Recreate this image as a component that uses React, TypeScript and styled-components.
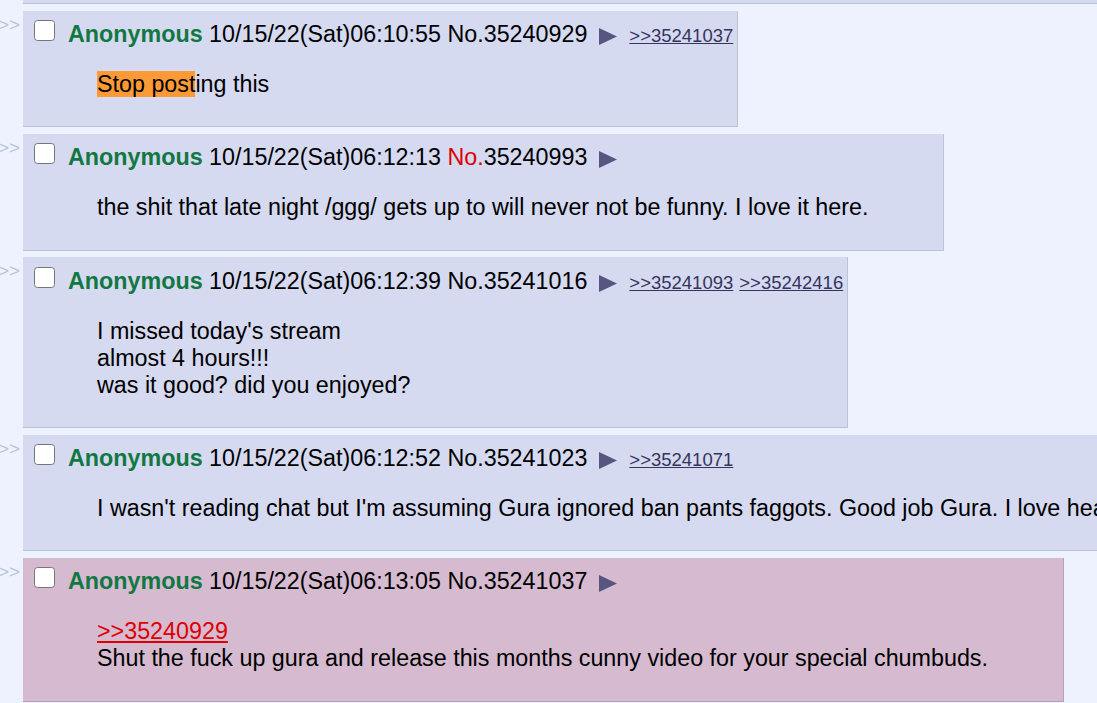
import React from 'react';
import styled, { createGlobalStyle, css } from 'styled-components';

const GlobalStyle = createGlobalStyle`
  html, body {
    margin: 0;
    padding: 0;
    overflow: hidden;
    background: #eef2ff;
  }
  body {
    font-family: 'Liberation Sans', Arial, Helvetica, sans-serif;
    font-size: 23.3px;
    color: #000;
  }
`;

const Thread = styled.div`
  display: flex;
  flex-direction: column;
`;

const PrevTail = styled.div`
  height: 3px;
  margin: 0 0 6.67px 23px;
  background: #d6daf0;
  border-bottom: 1px solid #b7c5d9;
`;

const Row = styled.div`
  display: flex;
  align-items: flex-start;
  margin-bottom: 6.67px;
`;

const SideArrows = styled.div`
  flex: 0 0 25px;
  margin-left: -2px;
  padding-top: 3px;
  font-size: 19px;
  color: #b7c5d9;
  white-space: nowrap;
  overflow: hidden;
`;

const Post = styled.div<{ $highlight?: boolean }>`
  flex-shrink: 0;
  width: max-content;
  padding: 9.5px 4px 0 0;
  background: #d6daf0;
  border-right: 1px solid #b7c5d9;
  border-bottom: 1px solid #b7c5d9;
  ${(p) =>
    p.$highlight &&
    css`
      background: #d6bad0;
      border-color: #ba9dbf;
    `}
`;

const PostInfo = styled.div`
  height: 27px;
  line-height: 27px;
  padding-left: 11px;
  white-space: nowrap;
`;

const Check = styled.input.attrs({ type: 'checkbox' })`
  appearance: none;
  display: inline-block;
  width: 21px;
  height: 21px;
  margin: 0 13px 0 0;
  box-sizing: border-box;
  vertical-align: 1px;
  background: #fff;
  border: 1.5px solid #767676;
  border-radius: 3.5px;
`;

const Name = styled.span`
  color: #117743;
  font-weight: bold;
`;

const PostNum = styled.span<{ $hover?: boolean }>`
  color: ${(p) => (p.$hover ? '#dd0000' : '#000')};
`;

const MenuBtn = styled.svg`
  width: 18px;
  height: 17px;
  margin: 0 12px 0 12px;
  vertical-align: -3px;
`;

const Backlink = styled.a`
  font-size: 18.5px;
  color: #34345c;
  text-decoration: underline;
  margin-right: 6px;
  &:last-child {
    margin-right: 0;
  }
`;

const Message = styled.blockquote`
  margin: 24px 71px 28.17px 74px;
  line-height: 27px;
  white-space: nowrap;
`;

const Mark = styled.span`
  background: #fd9a36;
`;

const QuoteLink = styled.a`
  color: #dd0000;
  text-decoration: underline;
`;

type PostData = {
  time: string;
  no: string;
  backlinks?: string[];
  hoverNo?: boolean;
  highlight?: boolean;
  body: React.ReactNode;
};

const posts: PostData[] = [
  {
    time: '10/15/22(Sat)06:10:55',
    no: '35240929',
    backlinks: ['35241037'],
    body: (
      <>
        <Mark>Stop post</Mark>ing this
      </>
    ),
  },
  {
    time: '10/15/22(Sat)06:12:13',
    no: '35240993',
    hoverNo: true,
    body: 'the shit that late night /ggg/ gets up to will never not be funny. I love it here.',
  },
  {
    time: '10/15/22(Sat)06:12:39',
    no: '35241016',
    backlinks: ['35241093', '35242416'],
    body: (
      <>
        I missed today's stream
        <br />
        almost 4 hours!!!
        <br />
        was it good? did you enjoyed?
      </>
    ),
  },
  {
    time: '10/15/22(Sat)06:12:52',
    no: '35241023',
    backlinks: ['35241071'],
    body: "I wasn't reading chat but I'm assuming Gura ignored ban pants faggots. Good job Gura. I love hearing her laugh.",
  },
  {
    time: '10/15/22(Sat)06:13:05',
    no: '35241037',
    highlight: true,
    body: (
      <>
        <QuoteLink href="#p35240929">&gt;&gt;35240929</QuoteLink>
        <br />
        Shut the fuck up gura and release this months cunny video for your special chumbuds.
      </>
    ),
  },
];

const Arrow = () => (
  <MenuBtn viewBox="0 0 18 17">
    <polygon points="0,0 18,8.5 0,17" fill="#565681" />
  </MenuBtn>
);

const Reply: React.FC<{ post: PostData }> = ({ post }) => (
  <Row>
    <SideArrows>&gt;&gt;</SideArrows>
    <Post $highlight={post.highlight}>
      <PostInfo>
        <Check />
        <Name>Anonymous</Name> {post.time}{' '}
        <PostNum $hover={post.hoverNo}>No.</PostNum>
        {post.no}
        <Arrow />
        {post.backlinks?.map((b) => (
          <Backlink key={b} href={`#p${b}`}>
            &gt;&gt;{b}
          </Backlink>
        ))}
      </PostInfo>
      <Message>{post.body}</Message>
    </Post>
  </Row>
);

const App: React.FC = () => {
  return (
    <>
      <GlobalStyle />
      <Thread>
        <PrevTail />
        {posts.map((p) => (
          <Reply key={p.no} post={p} />
        ))}
      </Thread>
    </>
  );
};

export default App;
